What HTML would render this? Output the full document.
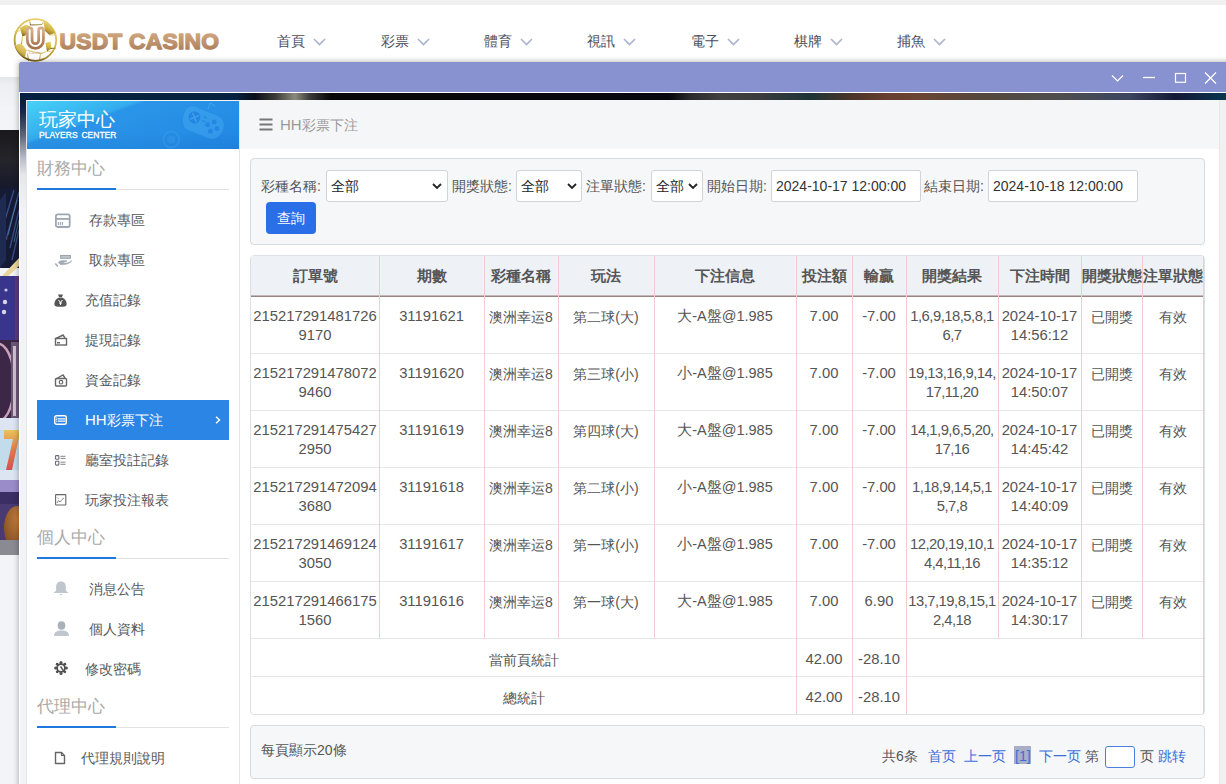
<!DOCTYPE html>
<html><head><meta charset="utf-8">
<style>
*{box-sizing:border-box;margin:0;padding:0}
html,body{width:1226px;height:784px;overflow:hidden;background:#f3f4f8;font-family:"Liberation Sans",sans-serif;position:relative}
.abs{position:absolute}
#topstrip{left:0;top:0;width:1226px;height:5px;background:#f1f1f1}
#header{left:0;top:5px;width:1226px;height:72px;background:#fff}
#hshadow{left:0;top:77px;width:1226px;height:30px;background:linear-gradient(180deg,#e4e5e9 0,#eeeff2 8px,#f2f3f6 30px)}
.nav{position:absolute;top:31px;font-size:14px;color:#4d4d5c;white-space:nowrap;line-height:20px}
.nav svg{position:absolute;left:35.5px;top:7px}
#casino{left:0;top:130px;width:19px;height:425px;background:linear-gradient(180deg,#18181e 0,#1b1c25 58px,#1d2445 70px,#24305a 120px,#2e3a6a 135px,#c9a858 140px,#3a3388 146px,#37307a 205px,#4b2f55 215px,#3f2a4a 280px,#d8d0ea 290px,#e8a060 305px,#e05a38 330px,#c8c4e0 350px,#6050a0 360px,#5a4a90 370px,#9a6a3a 380px,#a86a30 410px,#707080 420px,#505060 425px)}
#modal{left:19px;top:62px;width:1220px;height:730px;box-shadow:0 0 6px rgba(0,0,0,.35)}
#mtitle{left:0;top:0;width:100%;height:30px;background:#8892d0;border-radius:2px 0 0 0}
#mwhite{left:0;top:30px;width:100%;height:1px;background:#fff}
#content{left:0;top:31px;width:100%;height:700px;background:#f2f3f6;border-left:1px solid #fff}
#bgstrip{left:1px;top:0;width:1206px;height:7px;background:linear-gradient(90deg,#04223f 0,#062240 215px,#0a0e18 235px,#3a3a36 255px,#8a8a7c 275px,#3a3a38 290px,#08080a 310px,#06070c 650px,#2a2a2c 670px,#404040 700px,#3c3c3c 740px,#1e3436 790px,#4a3428 830px,#6a4030 870px,#6a4434 900px,#55483c 960px,#4e4e4e 1040px,#3a4560 1110px,#141a36 1155px,#0a3550 1206px)}
#bgleft{left:1px;top:7px;width:7px;height:300px;background:linear-gradient(180deg,#04203f 0,#16284a 12px,#5a6478 35px,#b8bcc8 58px,#e6e7eb 75px,#f2f3f6 110px)}
#sidebar{left:26px;top:100px;width:214px;height:700px;background:#fff;border-top:1px solid #f4f4f4;border-left:1px solid #e4e6ea;border-right:1px solid #e4e6ea}
#sbhead{left:27px;top:101px;width:212px;height:48px;background:linear-gradient(180deg,rgba(255,255,255,0) 60%,rgba(0,40,120,.06) 100%),linear-gradient(160deg,#48d2f6 0,#3cbdf2 18%,#34acee 32%,#2a95e8 35%,#2790e6 60%,#2186e2 100%);overflow:hidden}
.sec{position:absolute;left:37px;font-size:17px;color:#a9a9a9;line-height:20px}
.secline{position:absolute;left:37px;width:192px;height:1px;background:#e2e2e2}
.secline b{position:absolute;left:0;top:-1px;width:79px;height:2px;background:#1f78e0}
.item{position:absolute;left:37px;width:192px;height:40px;font-size:14px;color:#595959;line-height:40px}
.item .ic{position:absolute;left:17px;top:0;height:40px;display:flex;align-items:center}
.item .tx{position:absolute;left:52px;top:0}
.item.on{background:#2b85e4;color:#fff}
#crumb{left:240px;top:100px;width:979px;height:49px;background:#f5f6f8}
#main{left:240px;top:149px;width:979px;height:640px;background:#fff}
#scroll{left:1219px;top:100px;width:7px;height:684px;background:#f1f1f1;border-left:1px solid #e8e8e8}
#filter{left:250px;top:158px;width:955px;height:87px;background:#f6f7f9;border:1px solid #d6dbe0;border-radius:4px}
.lbl{position:absolute;top:176px;font-size:14px;color:#555;line-height:20px;white-space:nowrap}
.sel{position:absolute;top:170px;height:32px;background:#fff;border:1px solid #ced4da;border-radius:3px;font-size:14px;color:#212529;line-height:30px;padding-left:4px}
.sel svg{position:absolute;top:12px}
.inp{position:absolute;top:170px;height:32px;background:#fff;border:1px solid #ced4da;border-radius:2px;font-size:14px;color:#333;line-height:30px;padding-left:4px}
#btn{left:266px;top:202px;width:50px;height:32px;background:#2a6ee8;border-radius:4px;color:#fff;font-size:14px;line-height:33px;text-align:center}
#table{left:250px;top:255px;width:955px;height:460px;border:1px solid #dde1e6;border-radius:4px;background:#fff;overflow:hidden}
.pg{position:absolute;top:746px;font-size:14px;line-height:20px;color:#3a6fd8;white-space:nowrap}
.th{position:absolute;top:265px;height:22px;font-size:15px;font-weight:bold;color:#555;text-align:center;line-height:22px;white-space:nowrap}
.td{position:absolute;padding-top:11px;font-size:14.8px;color:#555;text-align:center;line-height:19.3px;white-space:nowrap}
.td.cj{font-size:14px;padding-top:12px}
.td.mx{font-size:14.5px}
.td.rs{letter-spacing:-0.5px}
.rl{position:absolute;left:251px;width:953px;height:1px;background:#e6e6e6}
.cl{position:absolute;width:1px;background:#f1cccc}
#pager{left:250px;top:725px;width:955px;height:54px;background:#f6f7f9;border:1px solid #d6dbe0;border-radius:4px}
</style></head><body>
<div id="topstrip" class="abs"></div>
<div id="header" class="abs">
  </div>
<svg class="abs" style="left:12px;top:17px" width="210" height="48" viewBox="0 0 210 48">
    <defs>
      <linearGradient id="gold" x1="0.7" y1="0" x2="0.3" y2="1"><stop offset="0" stop-color="#e8d070"/><stop offset=".5" stop-color="#d4b848"/><stop offset=".8" stop-color="#a88a30"/><stop offset="1" stop-color="#6a5010"/></linearGradient>
      <linearGradient id="brown" x1="0" y1="0" x2="0" y2="1"><stop offset="0" stop-color="#d4ac88"/><stop offset="1" stop-color="#a67650"/></linearGradient>
      <linearGradient id="tbrown" x1="0" y1="0" x2="0" y2="1"><stop offset="0" stop-color="#d8b08a"/><stop offset=".5" stop-color="#c09570"/><stop offset="1" stop-color="#a47650"/></linearGradient>
    </defs>
    <circle cx="23.4" cy="23" r="20.8" fill="#fff" stroke="url(#gold)" stroke-width="1.8"/>
    <g fill="url(#gold)">
      <path d="M31.5 5 C37 6.5 41 10.5 43 16 L37.5 18 L33 14 Z"/>
      <path d="M8 11 L14 7.5 L18.5 9.5 L17 17 L10.5 19.5 Z"/>
      <path d="M2.8 28 L9.5 26.5 L14.5 33 L13 40.5 C8 38 4.5 33.5 2.8 28 Z" opacity=".95"/>
      <path d="M33.5 26 L38.5 24.5 L39.5 31.5 L35 34.5 Z"/>
    </g>
    <g stroke="url(#gold)" stroke-width=".9" fill="none">
      <path d="M17.5 3.2 L18.5 8 L30 7.5 L31.5 5"/>
      <path d="M8.5 13.5 L2.8 15 M9.5 27 L10.5 19.5"/>
      <path d="M37.5 18 L44 18 M38.5 31.5 L44 31"/>
      <path d="M14.5 33 L28.5 36.5 L35 34.5 M16.5 43.8 L15.5 36.5 M28.5 36.5 L27.5 43.8 M35 34.5 L40 34"/>
    </g>
    <path d="M17.65 13.35 V23.35 A5.7 5.7 0 0 0 29.05 23.35 V13.35" fill="none" stroke="url(#brown)" stroke-width="7.5" stroke-linecap="round"/>
    <path d="M17.65 13.35 V23.35 A5.7 5.7 0 0 0 29.05 23.35 V13.35" fill="none" stroke="#fff" stroke-width="2" stroke-linecap="round"/>
    <text x="23.5" y="37.3" font-size="5" fill="#c0987a" text-anchor="middle" font-family="Liberation Serif" font-style="italic">Casino</text>
    <text x="47.5" y="32.2" font-size="22.8" font-weight="bold" font-family="Liberation Sans" fill="url(#tbrown)" stroke="url(#tbrown)" stroke-width="1.4" stroke-linejoin="round" textLength="159.5" lengthAdjust="spacing">USDT CASINO</text>
</svg>
<div>
</div>

<div class="nav" style="left:277px">首頁<svg width="13" height="8" viewBox="0 0 13 8"><path d="M1 1 L6.5 6.5 L12 1" fill="none" stroke="#aab4d0" stroke-width="1.6"/></svg></div>
<div class="nav" style="left:381px">彩票<svg width="13" height="8" viewBox="0 0 13 8"><path d="M1 1 L6.5 6.5 L12 1" fill="none" stroke="#aab4d0" stroke-width="1.6"/></svg></div>
<div class="nav" style="left:484px">體育<svg width="13" height="8" viewBox="0 0 13 8"><path d="M1 1 L6.5 6.5 L12 1" fill="none" stroke="#aab4d0" stroke-width="1.6"/></svg></div>
<div class="nav" style="left:587px">視訊<svg width="13" height="8" viewBox="0 0 13 8"><path d="M1 1 L6.5 6.5 L12 1" fill="none" stroke="#aab4d0" stroke-width="1.6"/></svg></div>
<div class="nav" style="left:691px">電子<svg width="13" height="8" viewBox="0 0 13 8"><path d="M1 1 L6.5 6.5 L12 1" fill="none" stroke="#aab4d0" stroke-width="1.6"/></svg></div>
<div class="nav" style="left:794px">棋牌<svg width="13" height="8" viewBox="0 0 13 8"><path d="M1 1 L6.5 6.5 L12 1" fill="none" stroke="#aab4d0" stroke-width="1.6"/></svg></div>
<div class="nav" style="left:897px">捕魚<svg width="13" height="8" viewBox="0 0 13 8"><path d="M1 1 L6.5 6.5 L12 1" fill="none" stroke="#aab4d0" stroke-width="1.6"/></svg></div>
<div id="hshadow" class="abs"></div><svg class="abs" style="left:0;top:130px" width="19" height="425" viewBox="0 0 19 425">
 <defs>
  <linearGradient id="cz1" x1="0" y1="0" x2="0" y2="1"><stop offset="0" stop-color="#19191d"/><stop offset=".5" stop-color="#24242a"/><stop offset="1" stop-color="#16182a"/></linearGradient>
  <linearGradient id="cz7" x1="0" y1="0" x2="0" y2="1"><stop offset="0" stop-color="#f0c040"/><stop offset=".5" stop-color="#e86830"/><stop offset="1" stop-color="#d83838"/></linearGradient>
  <radialGradient id="czb" cx=".6" cy=".3" r=".8"><stop offset="0" stop-color="#c88040"/><stop offset="1" stop-color="#7a4a20"/></radialGradient>
 </defs>
 <rect x="0" y="0" width="19" height="60" fill="url(#cz1)"/>
 <rect x="0" y="58" width="19" height="80" fill="#151b34"/>
 <path d="M19 62 L6 110 M19 80 L10 118 M14 60 L2 100 M19 100 L12 130" stroke="#3a4c88" stroke-width="1.4"/>
 <path d="M17 70 L8 105 M19 90 L14 112" stroke="#5aa0b0" stroke-width=".8" opacity=".7"/>
 <path d="M0 70 L6 62 L6 130 L0 138 Z" fill="#1e2a50"/>
 <path d="M19 128 L19 136 L4 150 L2 146 Z" fill="#e8d49a"/>
 <rect x="0" y="146" width="19" height="64" fill="#3a358c"/>
 <rect x="15" y="146" width="4" height="64" fill="#5a3a80"/>
 <circle cx="5" cy="172" r="2.2" fill="#d8d8e8"/><circle cx="4" cy="182" r="2.2" fill="#d8d8e8"/><circle cx="6" cy="160" r="1.6" fill="#c8c8e0"/>
 <rect x="0" y="210" width="19" height="80" fill="#3c2846"/>
 <path d="M-6 215 A16 38 0 0 1 2 290" fill="none" stroke="#c8a0b8" stroke-width="2.5"/>
 <rect x="11" y="212" width="8" height="76" fill="#6a5878"/>
 <rect x="13" y="216" width="3" height="70" fill="#d0c0d0"/>
 <rect x="0" y="288" width="19" height="62" fill="#dde4f2"/>
 <rect x="0" y="300" width="19" height="40" fill="#b8d8ea" opacity=".7"/>
 <path d="M4 300 H19 V307 L12 340 H6 L13 309 H4 Z" fill="url(#cz7)" opacity=".85"/>
 <rect x="0" y="350" width="19" height="14" fill="#9a8cc8"/>
 <rect x="0" y="362" width="19" height="12" fill="#3a2e64"/>
 <rect x="0" y="374" width="19" height="44" fill="#4a3a72"/>
 <ellipse cx="17" cy="398" rx="13" ry="22" fill="url(#czb)"/>
 <rect x="0" y="410" width="19" height="15" fill="#8a8a92"/>
</svg>

<div id="modal" class="abs">
  <div id="mtitle" class="abs"></div>
  <div id="mwhite" class="abs"></div>
<svg class="abs" style="left:1092px;top:10px" width="120" height="14" viewBox="0 0 120 14">
 <path d="M1 3.5 L6.5 9 L12 3.5" fill="none" stroke="#fff" stroke-width="1.2"/>
 <path d="M32 5.5 H44" stroke="#fff" stroke-width="1.3"/>
 <rect x="64.5" y="1.5" width="10" height="8.8" fill="none" stroke="#fff" stroke-width="1.2"/>
 <path d="M94 0.5 L105 11.5 M105 0.5 L94 11.5" stroke="#fff" stroke-width="1.2"/>
</svg>

</div>
<div id="content" class="abs" style="left:19px;top:93px;width:1207px;height:691px"></div>
<div id="bgstrip" class="abs" style="left:20px;top:93px"></div>
<div id="bgleft" class="abs" style="left:20px;top:100px"></div>

<div id="sidebar" class="abs"></div>
<div id="sbhead" class="abs"></div>
<div id="crumb" class="abs"></div>
<div id="main" class="abs"></div>
<div id="scroll" class="abs"></div>
<div id="filter" class="abs"></div>

<div class="abs" style="left:39px;top:109px;font-size:19px;color:#fff;line-height:22px;white-space:nowrap">玩家中心</div>
<div class="abs" style="left:39px;top:130px;font-size:8.5px;color:#fff;line-height:10px;white-space:nowrap;word-spacing:1.5px;-webkit-text-stroke:.3px #fff">PLAYERS CENTER</div>
<svg class="abs" style="left:150px;top:100px" width="89" height="49" viewBox="0 0 89 49">
 <g transform="translate(-3 4) rotate(22 53 21)">
  <path d="M34 14 C34 7 40 5 46 6 L62 6 C70 5 76 9 76 17 C76 24 72 30 66 30 L44 30 C38 30 34 24 34 14 Z" fill="#48aaf2" opacity=".45"/>
  <circle cx="45" cy="16" r="6" fill="#1f7fe0" opacity=".75"/>
  <path d="M41.5 12.5 L48.5 19.5 M48.5 12.5 L41.5 19.5" stroke="#4aa6f0" stroke-width="1.6" opacity=".7"/>
  <circle cx="65" cy="13" r="2.4" fill="#1f7fe0" opacity=".7"/><circle cx="70" cy="18" r="2.4" fill="#1f7fe0" opacity=".7"/>
  <circle cx="60" cy="18" r="2.4" fill="#1f7fe0" opacity=".7"/><circle cx="65" cy="23" r="2.4" fill="#1f7fe0" opacity=".7"/>
  <path d="M53 12 H57 M53 16 H57" stroke="#1f7fe0" stroke-width="1.4" opacity=".6"/>
 </g>
 <path d="M58 9 L60 3 L65 6" fill="none" stroke="#5ab4f4" stroke-width="1" opacity=".5"/>
 <circle cx="21.3" cy="39.6" r="8" fill="none" stroke="#4aa8f0" stroke-width="2" opacity=".3"/>
 <circle cx="21.3" cy="39.6" r="4" fill="#3a9cee" opacity=".4"/>
</svg>
<div class="sec" style="top:159px">財務中心</div>
<div class="secline" style="top:189px"><b></b></div>
<div class="sec" style="top:528px">個人中心</div>
<div class="secline" style="top:558px"><b></b></div>
<div class="sec" style="top:697px">代理中心</div>
<div class="secline" style="top:727px"><b></b></div>

<div class="item" style="top:200px"><span class="ic"><svg width="17" height="15" viewBox="0 0 17 15" style="margin-top:1px"><rect x="1.9" y="1.4" width="13.8" height="12.6" rx="1.8" fill="none" stroke="#9ca7b1" stroke-width="1.8"/><path d="M1.5 5.9 H16" stroke="#9ca7b1" stroke-width="1.8"/><path d="M4.4 9.2 V11.8 M6.4 9.2 V11.8 M8.4 9.2 V11.8" stroke="#9ca7b1" stroke-width="1.1" stroke-linecap="round"/></svg></span><span class="tx">存款專區</span></div>
<div class="item" style="top:240px"><span class="ic"><svg width="18" height="14" viewBox="0 0 18 14"><rect x="6.6" y="2.5" width="9.8" height="2.8" fill="#bcc4cc" stroke="#9aa4ae" stroke-width="1"/><path d="M4 9.5 C5 8 6.5 7.2 8.5 7.2 L12.5 7.2 C13.3 7.2 13.3 8.6 12.5 8.8 L9.5 9.3 C10 9.8 11 9.9 12.5 9.8 C14.5 9.6 16 8.5 17.5 7.3 C18 7.5 17.8 8.3 17.3 8.8 C15.5 10.5 13.5 11.7 10.5 11.8 L6.5 11.9 Z" fill="#a4acb6"/><path d="M1.3 10.4 L3.9 13.4" stroke="#a4acb6" stroke-width="1.6"/></svg></span><span class="tx">取款專區</span></div>
<div class="item" style="top:280px"><span class="ic"><svg width="13" height="13" viewBox="0 0 13 13"><path d="M4 0.5 H9 L8 3 H5 Z" fill="#555"/><path d="M5 3.5 H8 C12 5 13 9 12.5 11 C12 12.5 10 12.8 6.5 12.8 C3 12.8 1 12.5 0.5 11 C0 9 1 5 5 3.5 Z" fill="#555"/><path d="M4.5 6 L6.5 8.5 L8.5 6 M6.5 8.5 V11 M5 9 H8" stroke="#fff" stroke-width="1" fill="none"/></svg></span><span class="tx" style="left:48px">充值記錄</span></div>
<div class="item" style="top:320px"><span class="ic"><svg width="14" height="12" viewBox="0 0 14 12"><path d="M1 5 L9 1 L11 4" fill="none" stroke="#666" stroke-width="1.4"/><rect x="1.5" y="4.5" width="11" height="6.5" fill="none" stroke="#666" stroke-width="1.4"/><rect x="3" y="8" width="3" height="1.5" fill="#666"/></svg></span><span class="tx" style="left:48px">提現記錄</span></div>
<div class="item" style="top:360px"><span class="ic"><svg width="14" height="13" viewBox="0 0 14 13"><path d="M2 5 L9 1 L11 4" fill="none" stroke="#666" stroke-width="1.4"/><rect x="1.5" y="4.5" width="11" height="7.5" rx="1" fill="none" stroke="#666" stroke-width="1.4"/><circle cx="7" cy="8.2" r="1.8" fill="none" stroke="#666" stroke-width="1.2"/></svg></span><span class="tx" style="left:48px">資金記錄</span></div>
<div class="item on" style="top:400px"><span class="ic"><svg width="13" height="10" viewBox="0 0 13 10"><rect x="0.7" y="0.7" width="11.6" height="8.6" rx="1.8" fill="none" stroke="#fff" stroke-width="1.4"/><path d="M3.6 3.8 H11.5 M3.6 6.2 H11.5" stroke="#fff" stroke-width="1.2"/><path d="M2.5 2.5 V7.5" stroke="#fff" stroke-width=".9" stroke-dasharray="1 .6"/></svg></span><span class="tx" style="left:48px"><span style="font-size:15px">HH</span>彩票下注</span><svg class="abs" style="left:178px;top:16px" width="6" height="8" viewBox="0 0 6 8"><path d="M1 0.8 L4.5 4 L1 7.2" fill="none" stroke="#fff" stroke-width="1.4"/></svg></div>
<div class="item" style="top:440px"><span class="ic"><svg width="13" height="11" viewBox="0 0 13 11"><rect x="1.5" y="0.6" width="3.4" height="3.6" rx=".8" fill="none" stroke="#6a6a7a" stroke-width="1.1"/><rect x="1.5" y="6.3" width="3.4" height="3.8" rx=".8" fill="none" stroke="#6a6a7a" stroke-width="1.1"/><path d="M6.5 1.3 H11.5 M6.5 3.4 H11.5 M6.5 7.2 H11.5 M6.5 9.3 H11.5" stroke="#777" stroke-width=".9"/></svg></span><span class="tx" style="left:48px">廳室投註記錄</span></div>
<div class="item" style="top:480px"><span class="ic"><svg width="13" height="12" viewBox="0 0 13 12"><rect x="1.6" y="0.6" width="10.2" height="10.4" rx=".5" fill="none" stroke="#666" stroke-width="1.1"/><path d="M3 9 L4.5 6.5 L6 8 L8 5.5 L10 4" fill="none" stroke="#777" stroke-width=".9"/><path d="M3.3 3.5 L4.5 5" stroke="#888" stroke-width=".8"/></svg></span><span class="tx" style="left:48px">玩家投注報表</span></div>

<div class="item" style="top:569px"><span class="ic"><svg width="16" height="15" viewBox="0 0 16 15" style="margin-top:-2px;margin-left:-1px;transform:scaleX(1.08)"><path d="M8 0.5 C4.5 0.5 3.5 3 3.5 6 L3.5 9.5 L1 12 H15 L12.5 9.5 L12.5 6 C12.5 3 11.5 0.5 8 0.5 Z" fill="#c0c6cd"/><path d="M6.5 13 H9.5 L8 14.5 Z" fill="#c0c6cd"/></svg></span><span class="tx">消息公告</span></div>
<div class="item" style="top:609px"><span class="ic"><svg width="17" height="15" viewBox="0 0 17 15" style="margin-top:-2px;margin-left:-1px"><ellipse cx="8.5" cy="4.5" rx="3.8" ry="4.3" fill="#a9b1ba"/><path d="M1 15 C1 11 4 9.5 8.5 9.5 C13 9.5 16 11 16 15 Z" fill="#c0c6cd"/></svg></span><span class="tx">個人資料</span></div>
<div class="item" style="top:649px"><span class="ic"><svg width="14" height="14" viewBox="0 0 14 14" style="margin-top:-2px"><g fill="#505050"><circle cx="7" cy="1.6" r="1.5"/><circle cx="7" cy="12.4" r="1.5"/><circle cx="1.6" cy="7" r="1.5"/><circle cx="12.4" cy="7" r="1.5"/><circle cx="3.2" cy="3.2" r="1.4"/><circle cx="10.8" cy="3.2" r="1.4"/><circle cx="3.2" cy="10.8" r="1.4"/><circle cx="10.8" cy="10.8" r="1.4"/></g><circle cx="7" cy="7" r="3.9" fill="none" stroke="#505050" stroke-width="1.8"/><path d="M6.5 5.5 L9.5 9.8" stroke="#505050" stroke-width="1.4"/></svg></span><span class="tx" style="left:48px">修改密碼</span></div>
<div class="item" style="top:738px"><span class="ic"><svg width="12" height="14" viewBox="0 0 12 14"><path d="M1.5 1.5 H7.5 L10.5 4.5 V12.5 H1.5 Z" fill="none" stroke="#666" stroke-width="1.4" stroke-linejoin="round"/><path d="M7.5 1.5 V4.5 H10.5" fill="none" stroke="#666" stroke-width="1.2"/></svg></span><span class="tx" style="left:44px">代理規則說明</span></div>

<svg class="abs" style="left:259px;top:118px" width="14" height="13" viewBox="0 0 14 13"><path d="M0.5 1.5 H13.5 M0.5 6.5 H13.5 M0.5 11.5 H13.5" stroke="#777" stroke-width="2"/></svg>
<div class="abs" style="left:280px;top:115px;font-size:14px;color:#9a9a9a;line-height:20px;white-space:nowrap"><span style="font-size:15px">HH</span>彩票下注</div>

<div class="lbl" style="left:261px">彩種名稱:</div>
<div class="sel" style="left:326px;width:122px">全部<svg style="left:105px" width="10" height="7" viewBox="0 0 10 7"><path d="M1 1 L5 5 L9 1" fill="none" stroke="#222" stroke-width="1.8"/></svg></div>
<div class="lbl" style="left:452px">開獎狀態:</div>
<div class="sel" style="left:516px;width:66px">全部<svg style="left:50px" width="10" height="7" viewBox="0 0 10 7"><path d="M1 1 L5 5 L9 1" fill="none" stroke="#222" stroke-width="1.8"/></svg></div>
<div class="lbl" style="left:586px">注單狀態:</div>
<div class="sel" style="left:651px;width:52px">全部<svg style="left:36px" width="10" height="7" viewBox="0 0 10 7"><path d="M1 1 L5 5 L9 1" fill="none" stroke="#222" stroke-width="1.8"/></svg></div>
<div class="lbl" style="left:707px">開始日期:</div>
<div class="inp" style="left:771px;width:150px">2024-10-17 12:00:00</div>
<div class="lbl" style="left:924px">結束日期:</div>
<div class="inp" style="left:988px;width:150px">2024-10-18 12:00:00</div>
<div id="btn" class="abs">查詢</div>
<div id="table" class="abs"></div>
<div id="pager" class="abs"></div>
<div class="abs" style="left:261px;top:740px;font-size:14px;color:#555;line-height:20px">每頁顯示20條</div>
<div class="abs pg" style="left:882px;color:#555">共6条</div>
<div class="abs pg" style="left:928px">首页</div>
<div class="abs pg" style="left:964px">上一页</div>
<div class="abs" style="left:1014px;top:746px;width:17px;height:18px;background:#a9adc6"></div>
<div class="abs pg" style="left:1015px">[1]</div>
<div class="abs pg" style="left:1039px">下一页</div>
<div class="abs pg" style="left:1085px;color:#555">第</div>
<div class="abs" style="left:1105px;top:746px;width:30px;height:22px;border:1px solid #4a7fe0;border-radius:3px;background:#fff"></div>
<div class="abs pg" style="left:1140px;color:#555">页</div>
<div class="abs pg" style="left:1158px">跳转</div>

<div class="abs" style="left:251px;top:256px;width:953px;height:39px;background:#eef1f5"></div>
<div class="abs" style="left:251px;top:295px;width:953px;height:1px;background:#c4b8b8"></div>
<div class="abs" style="left:251px;top:296px;width:953px;height:1px;background:#958585"></div>
<div class="th" style="left:251px;width:128px">訂單號</div>
<div class="th" style="left:379px;width:105px">期數</div>
<div class="th" style="left:484px;width:74px">彩種名稱</div>
<div class="th" style="left:558px;width:96px">玩法</div>
<div class="th" style="left:654px;width:142px">下注信息</div>
<div class="th" style="left:796px;width:56px">投注額</div>
<div class="th" style="left:852px;width:54px">輸贏</div>
<div class="th" style="left:906px;width:92px">開獎結果</div>
<div class="th" style="left:998px;width:83px">下注時間</div>
<div class="th" style="left:1081px;width:61px">開獎狀態</div>
<div class="th" style="left:1142px;width:62px">注單狀態</div>
<div class="td" style="left:251px;top:296px;width:128px">215217291481726<br>9170</div>
<div class="td" style="left:379px;top:296px;width:105px">31191621</div>
<div class="td cj" style="left:484px;top:296px;width:74px">澳洲幸运8</div>
<div class="td cj" style="left:558px;top:296px;width:96px">第二球(大)</div>
<div class="td mx" style="left:654px;top:296px;width:142px">大-A盤@1.985</div>
<div class="td" style="left:796px;top:296px;width:56px">7.00</div>
<div class="td" style="left:852px;top:296px;width:54px">-7.00</div>
<div class="td rs" style="left:906px;top:296px;width:92px">1,6,9,18,5,8,1<br>6,7</div>
<div class="td" style="left:998px;top:296px;width:83px">2024-10-17<br>14:56:12</div>
<div class="td cj" style="left:1081px;top:296px;width:61px">已開獎</div>
<div class="td cj" style="left:1142px;top:296px;width:62px">有效</div>
<div class="td" style="left:251px;top:353px;width:128px">215217291478072<br>9460</div>
<div class="td" style="left:379px;top:353px;width:105px">31191620</div>
<div class="td cj" style="left:484px;top:353px;width:74px">澳洲幸运8</div>
<div class="td cj" style="left:558px;top:353px;width:96px">第三球(小)</div>
<div class="td mx" style="left:654px;top:353px;width:142px">小-A盤@1.985</div>
<div class="td" style="left:796px;top:353px;width:56px">7.00</div>
<div class="td" style="left:852px;top:353px;width:54px">-7.00</div>
<div class="td rs" style="left:906px;top:353px;width:92px">19,13,16,9,14,<br>17,11,20</div>
<div class="td" style="left:998px;top:353px;width:83px">2024-10-17<br>14:50:07</div>
<div class="td cj" style="left:1081px;top:353px;width:61px">已開獎</div>
<div class="td cj" style="left:1142px;top:353px;width:62px">有效</div>
<div class="td" style="left:251px;top:410px;width:128px">215217291475427<br>2950</div>
<div class="td" style="left:379px;top:410px;width:105px">31191619</div>
<div class="td cj" style="left:484px;top:410px;width:74px">澳洲幸运8</div>
<div class="td cj" style="left:558px;top:410px;width:96px">第四球(大)</div>
<div class="td mx" style="left:654px;top:410px;width:142px">大-A盤@1.985</div>
<div class="td" style="left:796px;top:410px;width:56px">7.00</div>
<div class="td" style="left:852px;top:410px;width:54px">-7.00</div>
<div class="td rs" style="left:906px;top:410px;width:92px">14,1,9,6,5,20,<br>17,16</div>
<div class="td" style="left:998px;top:410px;width:83px">2024-10-17<br>14:45:42</div>
<div class="td cj" style="left:1081px;top:410px;width:61px">已開獎</div>
<div class="td cj" style="left:1142px;top:410px;width:62px">有效</div>
<div class="td" style="left:251px;top:467px;width:128px">215217291472094<br>3680</div>
<div class="td" style="left:379px;top:467px;width:105px">31191618</div>
<div class="td cj" style="left:484px;top:467px;width:74px">澳洲幸运8</div>
<div class="td cj" style="left:558px;top:467px;width:96px">第二球(小)</div>
<div class="td mx" style="left:654px;top:467px;width:142px">小-A盤@1.985</div>
<div class="td" style="left:796px;top:467px;width:56px">7.00</div>
<div class="td" style="left:852px;top:467px;width:54px">-7.00</div>
<div class="td rs" style="left:906px;top:467px;width:92px">1,18,9,14,5,1<br>5,7,8</div>
<div class="td" style="left:998px;top:467px;width:83px">2024-10-17<br>14:40:09</div>
<div class="td cj" style="left:1081px;top:467px;width:61px">已開獎</div>
<div class="td cj" style="left:1142px;top:467px;width:62px">有效</div>
<div class="td" style="left:251px;top:524px;width:128px">215217291469124<br>3050</div>
<div class="td" style="left:379px;top:524px;width:105px">31191617</div>
<div class="td cj" style="left:484px;top:524px;width:74px">澳洲幸运8</div>
<div class="td cj" style="left:558px;top:524px;width:96px">第一球(小)</div>
<div class="td mx" style="left:654px;top:524px;width:142px">小-A盤@1.985</div>
<div class="td" style="left:796px;top:524px;width:56px">7.00</div>
<div class="td" style="left:852px;top:524px;width:54px">-7.00</div>
<div class="td rs" style="left:906px;top:524px;width:92px">12,20,19,10,1<br>4,4,11,16</div>
<div class="td" style="left:998px;top:524px;width:83px">2024-10-17<br>14:35:12</div>
<div class="td cj" style="left:1081px;top:524px;width:61px">已開獎</div>
<div class="td cj" style="left:1142px;top:524px;width:62px">有效</div>
<div class="td" style="left:251px;top:581px;width:128px">215217291466175<br>1560</div>
<div class="td" style="left:379px;top:581px;width:105px">31191616</div>
<div class="td cj" style="left:484px;top:581px;width:74px">澳洲幸运8</div>
<div class="td cj" style="left:558px;top:581px;width:96px">第一球(大)</div>
<div class="td mx" style="left:654px;top:581px;width:142px">大-A盤@1.985</div>
<div class="td" style="left:796px;top:581px;width:56px">7.00</div>
<div class="td" style="left:852px;top:581px;width:54px">6.90</div>
<div class="td rs" style="left:906px;top:581px;width:92px">13,7,19,8,15,1<br>2,4,18</div>
<div class="td" style="left:998px;top:581px;width:83px">2024-10-17<br>14:30:17</div>
<div class="td cj" style="left:1081px;top:581px;width:61px">已開獎</div>
<div class="td cj" style="left:1142px;top:581px;width:62px">有效</div>
<div class="rl" style="top:353px"></div>
<div class="rl" style="top:410px"></div>
<div class="rl" style="top:467px"></div>
<div class="rl" style="top:524px"></div>
<div class="rl" style="top:581px"></div>
<div class="rl" style="top:638px"></div>
<div class="rl" style="top:676px"></div>
<div class="cl" style="left:379px;top:256px;height:382px"></div>
<div class="cl" style="left:484px;top:256px;height:382px"></div>
<div class="cl" style="left:558px;top:256px;height:382px"></div>
<div class="cl" style="left:654px;top:256px;height:382px"></div>
<div class="cl" style="left:796px;top:256px;height:458px"></div>
<div class="cl" style="left:852px;top:256px;height:458px"></div>
<div class="cl" style="left:906px;top:256px;height:458px"></div>
<div class="cl" style="left:998px;top:256px;height:382px"></div>
<div class="cl" style="left:1081px;top:256px;height:382px"></div>
<div class="cl" style="left:1142px;top:256px;height:382px"></div>
<div class="cl" style="left:1203px;top:256px;height:458px"></div>
<div class="td cj" style="left:251px;top:638.5px;width:545px">當前頁統計</div>
<div class="td" style="left:796px;top:639px;width:56px">42.00</div>
<div class="td" style="left:852px;top:639px;width:54px">-28.10</div>
<div class="td cj" style="left:251px;top:677px;width:545px">總統計</div>
<div class="td" style="left:796px;top:677px;width:56px">42.00</div>
<div class="td" style="left:852px;top:677px;width:54px">-28.10</div>

</body></html>
